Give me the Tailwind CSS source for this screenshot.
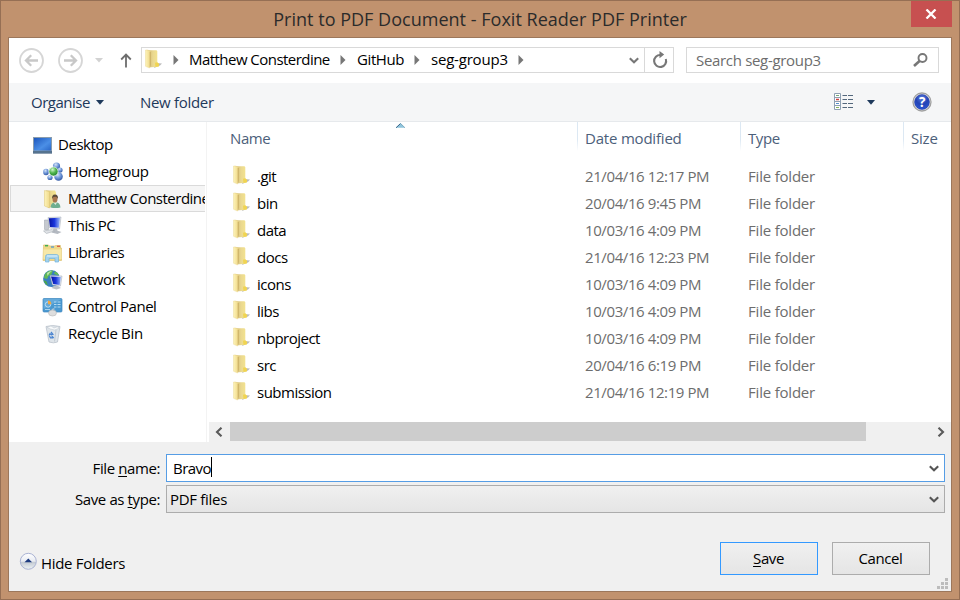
<!DOCTYPE html>
<html lang="en-GB">
<head>
<meta charset="utf-8">
<title>Print to PDF Document</title>
<script src="https://cdn.jsdelivr.net/npm/@tailwindcss/browser@4"></script>
</head>
<body class="w-[960px] h-[600px] overflow-hidden">
<svg class="absolute w-0 h-0">
  <defs>
    <linearGradient id="fa" x1="0" x2="1"><stop offset="0" stop-color="#fdf3b8"/><stop offset="1" stop-color="#f0da8c"/></linearGradient>
    <linearGradient id="fb" x1="0" x2="1"><stop offset="0" stop-color="#cfb468"/><stop offset=".5" stop-color="#ead890"/><stop offset="1" stop-color="#f6e68e"/></linearGradient>
    <linearGradient id="blue" x1="0" x2="1" y2="1"><stop offset="0" stop-color="#1c56bd"/><stop offset=".6" stop-color="#4b8fe6"/><stop offset="1" stop-color="#2a67c8"/></linearGradient>
    <linearGradient id="scr" x1="0" x2="1"><stop offset="0" stop-color="#0713a0"/><stop offset=".5" stop-color="#1a35dc"/><stop offset="1" stop-color="#9dbcfa"/></linearGradient>
    <radialGradient id="ball" cx=".4" cy=".3" r=".75"><stop offset="0" stop-color="#d6e4f8"/><stop offset=".5" stop-color="#6f97d8"/><stop offset="1" stop-color="#2c529f"/></radialGradient>
    <radialGradient id="gball" cx=".4" cy=".3" r=".75"><stop offset="0" stop-color="#d3f6cd"/><stop offset=".5" stop-color="#4fb54c"/><stop offset="1" stop-color="#1c7a2c"/></radialGradient>
    <radialGradient id="help" cx=".5" cy=".25" r=".8"><stop offset="0" stop-color="#5b7fe0"/><stop offset=".5" stop-color="#2343b5"/><stop offset="1" stop-color="#2c58d8"/></radialGradient>
    <linearGradient id="btn" x2="0" y2="1"><stop offset="0" stop-color="#fff"/><stop offset=".5" stop-color="#e8ebf2"/><stop offset=".55" stop-color="#c3cad3"/><stop offset="1" stop-color="#eef3f4"/></linearGradient>
    <filter id="soft"><feGaussianBlur stdDeviation=".7"/></filter>
  </defs>
  <symbol id="folder" viewBox="0 0 20 20">
    <path d="M12 14l6 .5-2 2-6 2.500z" fill="#777" opacity=".5" filter="url(#soft)"/>
    <path d="M3 1.200l9.500.1.800 1v11.500l1.700 1v2.400l-2.500.8-6 .2z" fill="url(#fb)"/>
    <path d="M11 13.800l2.300-.5 1.700 1.500v2.400l-3.500.8z" fill="#f0d452"/>
    <path d="M1.500 1q2-.4 3.500.6l1 1v16q-.7.5-1.500 0l-3-1.300z" fill="url(#fa)" stroke="#e8d389" stroke-width=".4"/>
    <path d="M6.200 3v15.200" stroke="#b99a4c" stroke-width=".6"/>
  </symbol>
  <symbol id="chev" viewBox="0 0 10 7"><path d="M.8 1.200L5 5.200 9.200 1.200" fill="none" stroke="currentColor" stroke-width="2.100"/></symbol>
</svg>

<div class="w-[960px] h-[600px] flex flex-col bg-[#c1926e] border border-[#966f54] text-black text-[15px] leading-[20px] font-['Open_Sans','Noto_Sans',sans-serif] tracking-[-0.4px] whitespace-nowrap">
  <header class="h-[36px] shrink-0 relative flex items-center justify-center text-[18px] tracking-[0.02px] text-[#2b2b2b]">
    <span>Print to PDF Document - Foxit Reader PDF Printer</span>
    <button class="absolute right-[7px] top-0 w-[41px] h-[26px] bg-[#c75050] flex items-center justify-center" aria-label="Close">
      <svg class="w-[12px] h-[10px] mr-px" viewBox="0 0 12 10"><path d="M1.500 .5L10.500 9.500M10.500 .5L1.500 9.500" stroke="#fff" stroke-width="2.300"/></svg>
    </button>
  </header>

  <div class="mx-[7px] h-[555px] border border-[#9c775b] flex flex-col bg-white overflow-hidden">
    <nav class="h-[45px] shrink-0 flex items-center pl-[10px] pb-px">
      <svg class="w-[25px] h-[25px] shrink-0" viewBox="0 0 25 25" fill="none" stroke="#d6d6d6"><circle cx="12.500" cy="12.500" r="11.500" stroke-width="1.800"/><path d="M19 12.500H7.500M12.200 7.300L7 12.500l5.200 5.200" stroke="#c8c8c8" stroke-width="2.300"/></svg>
      <svg class="w-[25px] h-[25px] shrink-0 ml-[14px]" viewBox="0 0 25 25" fill="none" stroke="#d6d6d6"><circle cx="12.500" cy="12.500" r="11.500" stroke-width="1.800"/><path d="M6 12.500H17.500M12.800 7.300L18 12.500l-5.200 5.200" stroke="#c8c8c8" stroke-width="2.300"/></svg>
      <svg class="w-[8px] h-[5px] shrink-0 ml-[12px]" viewBox="0 0 8 5"><path d="M0 0h8L4 4.500z" fill="#d2d2d2"/></svg>
      <svg class="w-[12px] h-[15px] shrink-0 ml-[17px]" viewBox="0 0 12 15" fill="none" stroke="#6d6d6d" stroke-width="1.800"><path d="M6 14.500V2M1.200 6.500L6 1.600l4.800 4.900"/></svg>
      <div class="ml-[9px] w-[533px] h-[26px] border border-[#d9d9d9] flex items-center">
        <svg class="w-[20px] h-[20px] shrink-0 ml-[2px] -mt-[2px]"><use href="#folder"/></svg>
        <svg class="w-[6px] h-[10px] shrink-0 ml-[9px]" viewBox="0 0 6 10"><path d="M.5 0l5 5-5 5z" fill="#777"/></svg>
        <span class="ml-[10px] -mt-[2px] w-[141px] tracking-[-0.54px]">Matthew Consterdine</span>
        <svg class="w-[6px] h-[10px] shrink-0 ml-[10px]" viewBox="0 0 6 10"><path d="M.5 0l5 5-5 5z" fill="#777"/></svg>
        <span class="ml-[11px] -mt-[2px] w-[47px]">GitHub</span>
        <svg class="w-[6px] h-[10px] shrink-0 ml-[10px]" viewBox="0 0 6 10"><path d="M.5 0l5 5-5 5z" fill="#777"/></svg>
        <span class="ml-[11px] -mt-[2px] w-[77px] tracking-[-0.2px]">seg-group3</span>
        <svg class="w-[6px] h-[10px] shrink-0 ml-[10px]" viewBox="0 0 6 10"><path d="M.5 0l5 5-5 5z" fill="#777"/></svg>
        <svg class="w-[10px] h-[7px] shrink-0 ml-auto mr-[5px] text-[#777]"><use href="#chev"/></svg>
        <div class="w-[29px] h-full border-l border-[#d9d9d9] flex items-center justify-center shrink-0 pl-[2px]">
          <svg class="w-[16px] h-[18px]" viewBox="0 0 16 18"><path d="M8.500 4A6 6 0 1 0 13.800 8" fill="none" stroke="#777" stroke-width="2.100"/><path d="M7.500 0l4.700 3.600-4.700 3.700z" fill="#777"/></svg>
        </div>
      </div>
      <div class="ml-[12px] w-[253px] h-[26px] border border-[#d9d9d9] flex items-center justify-between pl-[9px] pr-[10px] text-[#6d6d6d]">
        <span class="tracking-[-0.32px]">Search seg-group3</span>
        <svg class="w-[15px] h-[14px]" viewBox="0 0 15 14" fill="none" stroke="#777"><circle cx="9.500" cy="5" r="4" stroke-width="1.900"/><path d="M6.800 7.700L1 13" stroke-width="2.600"/></svg>
      </div>
    </nav>

    <div class="h-[39px] shrink-0 bg-[#f5f6f7] border-b border-[#e6e9ec] flex items-center pl-[22px] text-[#1e395b]">
      <span class="w-[60px] tracking-[-0.5px]">Organise</span>
      <svg class="w-[8px] h-[5px] ml-[5px]" viewBox="0 0 8 5"><path d="M0 0h8L4 4.700z" fill="#1e395b"/></svg>
      <span class="ml-[36px] tracking-[-0.3px]">New folder</span>
      <svg class="w-[20px] h-[17px] ml-auto -mt-px" viewBox="0 0 20 17">
        <path d="M.5.500h6v16h-6zM.5 4.500h6M.5 8.500h6M.5 12.500h6" fill="#fff" stroke="#8ea0b2"/>
        <path d="M2 2.500h3" stroke="#76a976"/><path d="M2 6.500h3" stroke="#cf4040" stroke-width="1.500"/><path d="M2 10.500h3" stroke="#5590cc"/><path d="M2 14.500h3" stroke="#87b35a"/>
        <path d="M8.500 2.500H13m1 0h5M8.500 6.500H13m1 0h5M8.500 10.500H13m1 0h5M8.500 14.500H13m1 0h5" stroke="#53677c"/>
      </svg>
      <svg class="w-[8px] h-[5px] ml-[13px]" viewBox="0 0 8 5"><path d="M0 0h8L4 4.700z" fill="#1e395b"/></svg>
      <svg class="w-[20px] h-[20px] ml-[37px] mr-[19px] -mt-px" viewBox="0 0 20 20"><circle cx="10" cy="10" r="9" fill="#ececec" stroke="#a0a0a0" stroke-width="1.300"/><circle cx="10" cy="10" r="7.500" fill="url(#help)" stroke="#20379a" stroke-width=".5"/><text x="10" y="15" text-anchor="middle" font-family="Open Sans" font-weight="700" font-size="13.500" fill="#fff">?</text></svg>
    </div>

    <main class="h-[320px] shrink-0 flex">
      <aside class="w-[196px] mr-px shrink-0 pt-[9px] overflow-hidden">
        <div class="h-[27px] flex items-center pl-[23px]">
          <svg class="w-[22px] h-[18px] shrink-0" viewBox="0 0 22 18"><path d="M1 1h19v16.500h-19z" fill="#8a9cac"/><path d="M2 2h17v12.500h-17z" fill="url(#blue)"/><path d="M1 15h19v2.500h-19z" fill="#56738f"/></svg>
          <span class="ml-[4px] -mt-[2px] tracking-[-0.45px]">Desktop</span>
        </div>
        <div class="h-[27px] flex items-center pl-[33px]">
          <svg class="w-[22px] h-[20px] shrink-0" viewBox="0 0 22 20"><ellipse cx="4" cy="10" rx="2.800" ry="3.300" fill="url(#ball)"/><circle cx="8" cy="15.500" r="2.600" fill="url(#ball)"/><circle cx="14.500" cy="4" r="3.600" fill="url(#ball)"/><circle cx="18" cy="8" r="2.600" fill="url(#ball)"/><circle cx="16.500" cy="14.500" r="4.300" fill="url(#ball)"/><circle cx="11.500" cy="9.500" r="4.600" fill="url(#gball)" stroke="#fff" stroke-width=".7"/></svg>
          <span class="ml-[4px] -mt-[2px]">Homegroup</span>
        </div>
        <div class="h-[27px] ml-px flex items-center pl-[31px] bg-[#f5f5f5] border border-r-0 border-[#dadada]">
          <svg class="w-[22px] h-[20px] shrink-0" viewBox="0 0 22 20"><path d="M4 1.500h9l1 2v13l-8 2.500z" fill="url(#fb)"/><path d="M2.500 1.500l5 1v16.500l-5-2z" fill="url(#fa)" stroke="#dcc473" stroke-width=".5"/><path d="M8.500 18.500q.5-4.500 3.500-5h3q3 .5 3.500 5-5 1-10 0z" fill="#6fae90"/><path d="M11.500 13.500l2 2.500 1.500-2.500z" fill="#e3ebe0"/><ellipse cx="13" cy="10" rx="2.500" ry="3.500" fill="#a9774f"/><path d="M10.200 10q-.7-4.500 2.800-4.500 3.400 0 3 4.500-1-2.500-2.800-2.200-2.300-.3-3 2.200z" fill="#5a4a38"/></svg>
          <span class="ml-[4px] -mt-[2px] tracking-[-0.5px]">Matthew Consterdine</span>
        </div>
        <div class="h-[27px] flex items-center pl-[33px]">
          <svg class="w-[22px] h-[20px] shrink-0" viewBox="0 0 22 20"><path d="M2.500 4h4v9.500h-4z" fill="#c5c9cf" stroke="#9aa0a8" stroke-width=".5"/><path d="M6 1.500l13-.5-1.500 12-10-1z" fill="#e4e8ee" stroke="#9fa7b3" stroke-width=".5"/><path d="M6.800 2.300l11.300-.5-1.300 10-8.800-.9z" fill="url(#scr)"/><path d="M11.500 12.700h3.500l.5 2 4 1.300-4 2-6-1.500z" fill="#b4b9c1"/><path d="M1.500 15l8.500-1.500 2.500 1.500-8 2.500z" fill="#dfe2e6" stroke="#9ba2ab" stroke-width=".5"/></svg>
          <span class="ml-[4px] -mt-[2px] tracking-[-0.5px]">This PC</span>
        </div>
        <div class="h-[27px] flex items-center pl-[33px]">
          <svg class="w-[22px] h-[20px] shrink-0" viewBox="0 0 22 20"><path d="M1.500 3.500V2h5l1 1h5l1-.5h5V5h1v12.500H1z" fill="#efd98a" stroke="#dcc272" stroke-width=".7"/><path d="M1.500 6.500h18V16h-18z" fill="#f7e8a8"/><path d="M3 2.700h3" stroke="#44ad50" stroke-width="1.500"/><path d="M9 4h3" stroke="#5299d2" stroke-width="1.300"/><path d="M15 3.300h3" stroke="#d75c47" stroke-width="1.300"/><path d="M3.500 19v-5.500q0-2 2-2h9q2 0 2 2V19h-3.500v-3.500H7V19z" fill="#a3d3ee" stroke="#72b3da" stroke-width=".7"/><path d="M5 13h10.500" stroke="#d8effb" stroke-width="1.200"/></svg>
          <span class="ml-[4px] -mt-[2px] tracking-[-0.5px]">Libraries</span>
        </div>
        <div class="h-[27px] flex items-center pl-[33px]">
          <svg class="w-[22px] h-[20px] shrink-0" viewBox="0 0 22 20"><circle cx="9.500" cy="8.700" r="8.400" fill="#3a7fc0"/><path d="M4 2.700q3-2.500 7-2.200l-1.500 4-3 1.500L5 9 2 8q0-3 2-5.300zM13 1.200q3 1.500 4 4l-3-.5-2-1z" fill="#62ba55"/><path d="M1.500 10l3 1.500 1.500 4q-3.500-1.500-4.500-5.500z" fill="#4ba849"/><path d="M5 3q2.500-2 5-2-3.500 2-4.500 5z" fill="#d5f0c9" opacity=".8"/><path d="M8 5.500l12 .5-1.500 10-8-1z" fill="#e6eaf0" stroke="#9aa5b5" stroke-width=".5"/><path d="M9 6.500l10 .4-1.300 8-6.500-.8z" fill="url(#scr)"/><path d="M12 16h4l3 2-4.500 1.500-5-1.500z" fill="#bcc1c8"/></svg>
          <span class="ml-[4px] -mt-[2px]">Network</span>
        </div>
        <div class="h-[27px] flex items-center pl-[33px]">
          <svg class="w-[22px] h-[20px] shrink-0" viewBox="0 0 22 20"><rect x="1" y="1.500" width="19" height="13.500" rx="1" fill="#4a99d0" stroke="#3f88c0" stroke-width=".7"/><path d="M1.500 2h18L1.500 12z" fill="#7dbce6" opacity=".5"/><circle cx="6" cy="7.500" r="2.700" fill="none" stroke="#bfe0f5" stroke-width="1"/><path d="M6 7.200V3.500q3.300.3 3.300 3.700z" fill="#f2a742"/><path d="M12 5h2.500m1 0h3M12 7.500h2.500m1 0h3M12 10h2.500m1 0h3" stroke="#b5dbf2"/><path d="M3 12.500h5" stroke="#a9d3ee"/><path d="M9.500 13.500q.5-2 3-1.500" fill="none" stroke="#ddd"/><ellipse cx="10.500" cy="16" rx="4" ry="3" fill="#dedede" stroke="#aeaeae" stroke-width=".5"/></svg>
          <span class="ml-[4px] -mt-[2px] tracking-[-0.48px]">Control Panel</span>
        </div>
        <div class="h-[27px] flex items-center pl-[33px]">
          <svg class="w-[22px] h-[20px] shrink-0" viewBox="0 0 22 20"><path d="M4 2.500q6.500-2 14 0l-2.500 15.500q-4 1.700-8.500 0z" fill="#dfe5ea" stroke="#b3bcc5" stroke-width=".7"/><path d="M5 3.500l4-1.500 3 2 4-1.500.5 2-4 1.500-4-1z" fill="#f8fafb" stroke="#bcc5cd" stroke-width=".5"/><path d="M14 6l-1.500 11.500" stroke="#c3cbd3"/><path d="M9 8l1.800 2.200-1.800.3-1-.8-1 1.800M7.500 12l1 1.800h1.700v-1.300l1.500 1.500" fill="none" stroke="#4a84d0" stroke-width="1.300"/></svg>
          <span class="ml-[4px] -mt-[2px] tracking-[-0.32px]">Recycle Bin</span>
        </div>
      </aside>

      <section class="flex-1 min-w-0 border-l border-[#f3f3f3] flex flex-col">
        <div class="relative h-[41px] shrink-0 flex text-[#4c607a]">
          <svg class="absolute left-[189px] top-[1px] w-[9px] h-[5px]" viewBox="0 0 9 5"><path d="M0 4.800L4.500 .2 9 4.800z" fill="#8fc4dc"/><path d="M0 4.800L4.500 .5" stroke="#36658a" stroke-width="1"/><path d="M4.500.5L9 4.800" stroke="#6f9fb8" stroke-width=".8"/></svg>
          <div class="w-[370px] pl-[23px] pt-[6px]">Name</div>
          <div class="w-px h-[29px] bg-linear-to-b from-[#dce8f3] from-60% to-white"></div>
          <div class="w-[162px] pl-[7px] pt-[6px] tracking-[-0.2px]">Date modified</div>
          <div class="w-px h-[29px] bg-linear-to-b from-[#dce8f3] from-60% to-white"></div>
          <div class="w-[162px] pl-[7px] pt-[6px]">Type</div>
          <div class="w-px h-[29px] bg-linear-to-b from-[#dce8f3] from-60% to-white"></div>
          <div class="pl-[7px] pt-[6px] tracking-[-0.2px]">Size</div>
        </div>
        <div id="files" class="flex-1"></div>
        <div class="h-[20px] shrink-0 ml-[2px] bg-[#f0f0f0] flex items-start">
          <div class="w-[21px] h-[19px] flex items-center justify-center"><svg class="w-[8px] h-[10px] mr-[2px]" viewBox="0 0 8 10"><path d="M6.500 .7L2 5l4.500 4.300" fill="none" stroke="#5a5a5a" stroke-width="2.100"/></svg></div>
          <div class="w-[636px] h-[19px] bg-[#cdcdcd]"></div>
          <div class="ml-auto w-[21px] h-[19px] flex items-center justify-center"><svg class="w-[8px] h-[10px]" viewBox="0 0 8 10"><path d="M1.500 .7L6 5 1.500 9.300" fill="none" stroke="#5a5a5a" stroke-width="2.100"/></svg></div>
        </div>
      </section>
    </main>

    <footer class="flex-1 bg-[#f0f0f0] pt-[12px] flex flex-col">
      <div class="flex h-[28px] items-center">
        <span class="w-[151px] text-right">File <u class="underline-offset-2">n</u>ame:</span>
        <div class="ml-[6px] w-[779px] h-[28px] bg-white border border-[#569de5] flex items-center pl-[6px] pr-[5px]">
          <span class="tracking-[-0.55px]">Bravo</span><i class="w-px h-[20px] bg-black -mt-[2px]"></i>
          <svg class="ml-auto w-[10px] h-[7px] text-[#555]"><use href="#chev"/></svg>
        </div>
      </div>
      <div class="flex h-[28px] items-center mt-[3px]">
        <span class="w-[151px] text-right">Save as <u class="underline-offset-2">t</u>ype:</span>
        <div class="ml-[6px] w-[779px] h-[28px] bg-linear-to-b from-[#f0f0f0] to-[#e5e5e5] border border-[#acacac] flex items-center pl-[3px] pr-[5px]">
          <span class="tracking-[-0.3px]">PDF files</span>
          <svg class="ml-auto w-[10px] h-[7px] text-[#555]"><use href="#chev"/></svg>
        </div>
      </div>
      <div class="flex mt-[29px] h-[33px]">
        <svg class="w-[18px] h-[18px] ml-[10px] mt-[10px]" viewBox="0 0 18 18"><circle cx="9.300" cy="9.300" r="8" fill="url(#btn)" stroke="#a9b2d3" stroke-width="1"/><path d="M5.500 10.300L9.300 6.500l3.800 3.800z" fill="#1d3b80"/></svg>
        <span class="ml-[4px] mt-[11px] tracking-[-0.3px]">Hide Folders</span>
        <button class="ml-auto w-[98px] pb-[2px] pr-px border border-[#3399ff] bg-linear-to-b from-[#f0f0f0] to-[#e5e5e5] tracking-[-0.4px]"><u class="underline-offset-2">S</u>ave</button>
        <button class="ml-[14px] mr-[21px] w-[98px] pb-[2px] pr-px border border-[#acacac] bg-linear-to-b from-[#f0f0f0] to-[#e5e5e5] tracking-[-0.4px]">Cancel</button>
      </div>
      <svg class="ml-auto mr-[3px] mt-[3px] w-[11px] h-[11px] shrink-0" viewBox="0 0 11 11" fill="#bcbcbc"><path d="M8 0h3v3H8zM4 4h3v3H4zM8 4h3v3H8zM0 8h3v3H0zM4 8h3v3H4zM8 8h3v3H8z"/></svg>
    </footer>
  </div>
</div>
<script>
const files = [['.git','21/04/16 12:17 PM'],['bin','20/04/16 9:45 PM'],['data','10/03/16 4:09 PM'],['docs','21/04/16 12:23 PM'],['icons','10/03/16 4:09 PM'],['libs','10/03/16 4:09 PM'],['nbproject','10/03/16 4:09 PM'],['src','20/04/16 6:19 PM'],['submission','21/04/16 12:19 PM']];
document.getElementById('files').innerHTML = files.map(([name, date]) => `
  <div class="h-[27px] flex items-center text-[#6d6d6d]">
    <svg class="w-[20px] h-[20px] ml-[25px] -mt-[3px] shrink-0"><use href="#folder"/></svg>
    <span class="ml-[5px] -mt-[2px] w-[328px] text-black tracking-[-0.5px]">${name}</span>
    <span class="w-[163px] -mt-[2px]">${date}</span>
    <span class="-mt-[2px] tracking-[-0.2px]">File folder</span>
  </div>`).join('');
</script>
</body>
</html>
